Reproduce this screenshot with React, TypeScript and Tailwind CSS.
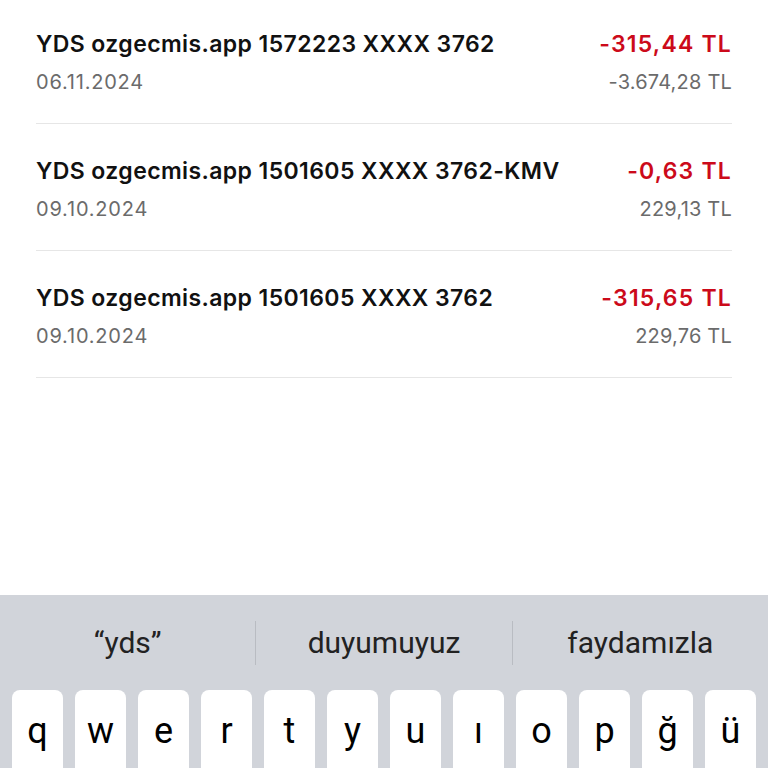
const rows = [
  { title: "YDS ozgecmis.app 1572223 XXXX 3762", date: "06.11.2024", amount: "-315,44 TL", balance: "-3.674,28 TL" },
  { title: "YDS ozgecmis.app 1501605 XXXX 3762-KMV", date: "09.10.2024", amount: "-0,63 TL", balance: "229,13 TL" },
  { title: "YDS ozgecmis.app 1501605 XXXX 3762", date: "09.10.2024", amount: "-315,65 TL", balance: "229,76 TL" },
];

const keys = ["q", "w", "e", "r", "t", "y", "u", "ı", "o", "p", "ğ", "ü"];

export default function App() {
  return (
    <div className="w-[768px] h-[768px] overflow-hidden bg-white flex flex-col font-['Inter',sans-serif]">
      <div className="flex-1 px-9 mt-[-3px]">
        {rows.map((r, i) => (
          <div key={i} className="h-[127px] border-b border-[#e6e6e6] flex flex-col pt-[31px]">
            <div className="flex items-center justify-between h-[32px]">
              <span className="text-[23px] font-semibold text-[#111] tracking-[0.4px]">{r.title}</span>
              <span className="text-[23px] font-semibold text-[#cc0a1a] tracking-[1.2px]">{r.amount}</span>
            </div>
            <div className="flex items-center justify-between h-[32px] mt-[6px]">
              <span className="text-[20px] text-[#6b6b6b] tracking-[0.8px]">{r.date}</span>
              <span className="text-[20px] text-[#6b6b6b] tracking-[0.2px]">{r.balance}</span>
            </div>
          </div>
        ))}
      </div>
      <div className="h-[173px] shrink-0 bg-[#d1d4da] flex flex-col font-['Roboto',sans-serif]">
        <div className="h-[95px] shrink-0 flex items-center">
          <div className="flex-1 text-center text-[30px] text-[#222]">“yds”</div>
          <div className="w-px h-[44px] bg-[#b9bcc2]" />
          <div className="flex-1 text-center text-[30px] text-[#222]">duyumuyuz</div>
          <div className="w-px h-[44px] bg-[#b9bcc2]" />
          <div className="flex-1 text-center text-[30px] text-[#222]">faydamızla</div>
        </div>
        <div className="flex gap-[12px] px-[12px] shrink-0">
          {keys.map((k) => (
            <div key={k} className="w-[51px] h-[90px] shrink-0 bg-white rounded-[8px] flex justify-center pt-[14px] text-[36px] text-black">
              {k}
            </div>
          ))}
        </div>
      </div>
    </div>
  );
}
